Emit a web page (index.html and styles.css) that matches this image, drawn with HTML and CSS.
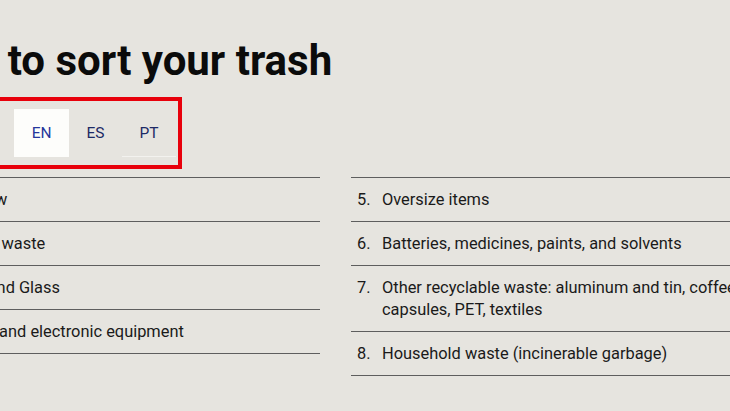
FILE: index.html
```html
<!DOCTYPE html>
<html lang="en">
<head>
<meta charset="utf-8">
<title>How to sort your trash</title>
<link rel="stylesheet" href="styles.css">
</head>
<body>
<main class="page">
  <h1 class="title">How to sort your trash</h1>
  <div class="lang-box">
    <nav class="lang-switch">
      <button class="lang">FR</button>
      <button class="lang lang-active">EN</button>
      <button class="lang">ES</button>
      <button class="lang lang-pt">PT</button>
    </nav>
  </div>
  <section class="lists">
    <ol class="list list-left">
      <li class="item"><span class="num">1.</span><span class="label">Overview</span></li>
      <li class="item"><span class="num">2.</span><span class="label">Organic waste</span></li>
      <li class="item"><span class="num">3.</span><span class="label">Paper and Glass</span></li>
      <li class="item"><span class="num">4.</span><span class="label">Electric and electronic equipment</span></li>
    </ol>
    <ol class="list">
      <li class="item"><span class="num">5.</span><span class="label">Oversize items</span></li>
      <li class="item"><span class="num">6.</span><span class="label">Batteries, medicines, paints, and solvents</span></li>
      <li class="item"><span class="num">7.</span><span class="label">Other recyclable waste: aluminum and tin, coffee capsules, PET, textiles</span></li>
      <li class="item"><span class="num">8.</span><span class="label">Household waste (incinerable garbage)</span></li>
    </ol>
  </section>
</main>
</body>
</html>
```
FILE: styles.css
```css
html, body {
  margin: 0;
  padding: 0;
  background: #e6e4df;
  overflow: hidden;
}
body {
  font-family: Roboto, "Liberation Sans", Arial, sans-serif;
  color: #1a1a1a;
}
.page {
  margin-left: -90px;
  width: 851px;
  padding-top: 36px;
}
.title {
  margin: 0 0 0 3px;
  font-size: 42px;
  line-height: 50px;
  font-weight: 700;
  color: #0b0b0b;
}
.lang-box {
  margin-top: 11px;
  margin-left: 44px;
  display: inline-flex;
  border: 4px solid #e8000b;
  padding: 8px 2px 8px 3px;
}
.lang-switch {
  display: flex;
}
.lang {
  height: 48px;
  padding: 0 17.5px;
  border: 0;
  background: transparent;
  font-family: Roboto, "Liberation Sans", Arial, sans-serif;
  font-size: 15.5px;
  color: #1d2a66;
  box-sizing: border-box;
}
.lang-active {
  background: #fdfdfb;
  color: #26379c;
}
.lang-pt {
  border-bottom: 1px solid #f3f2ef;
}
.lists {
  margin-top: 8px;
  display: grid;
  grid-template-columns: 410px 410px;
  column-gap: 31px;
  align-items: start;
}
.list {
  list-style: none;
  margin: 0;
  padding: 0;
  border-top: 1px solid #5e5e5e;
}
.item {
  display: flex;
  padding: 11px 0 10px 6px;
  font-size: 16.4px;
  line-height: 22px;
  border-bottom: 1px solid #5e5e5e;
}
.num {
  flex: 0 0 25px;
}
.label {
  flex: 1;
}
```
